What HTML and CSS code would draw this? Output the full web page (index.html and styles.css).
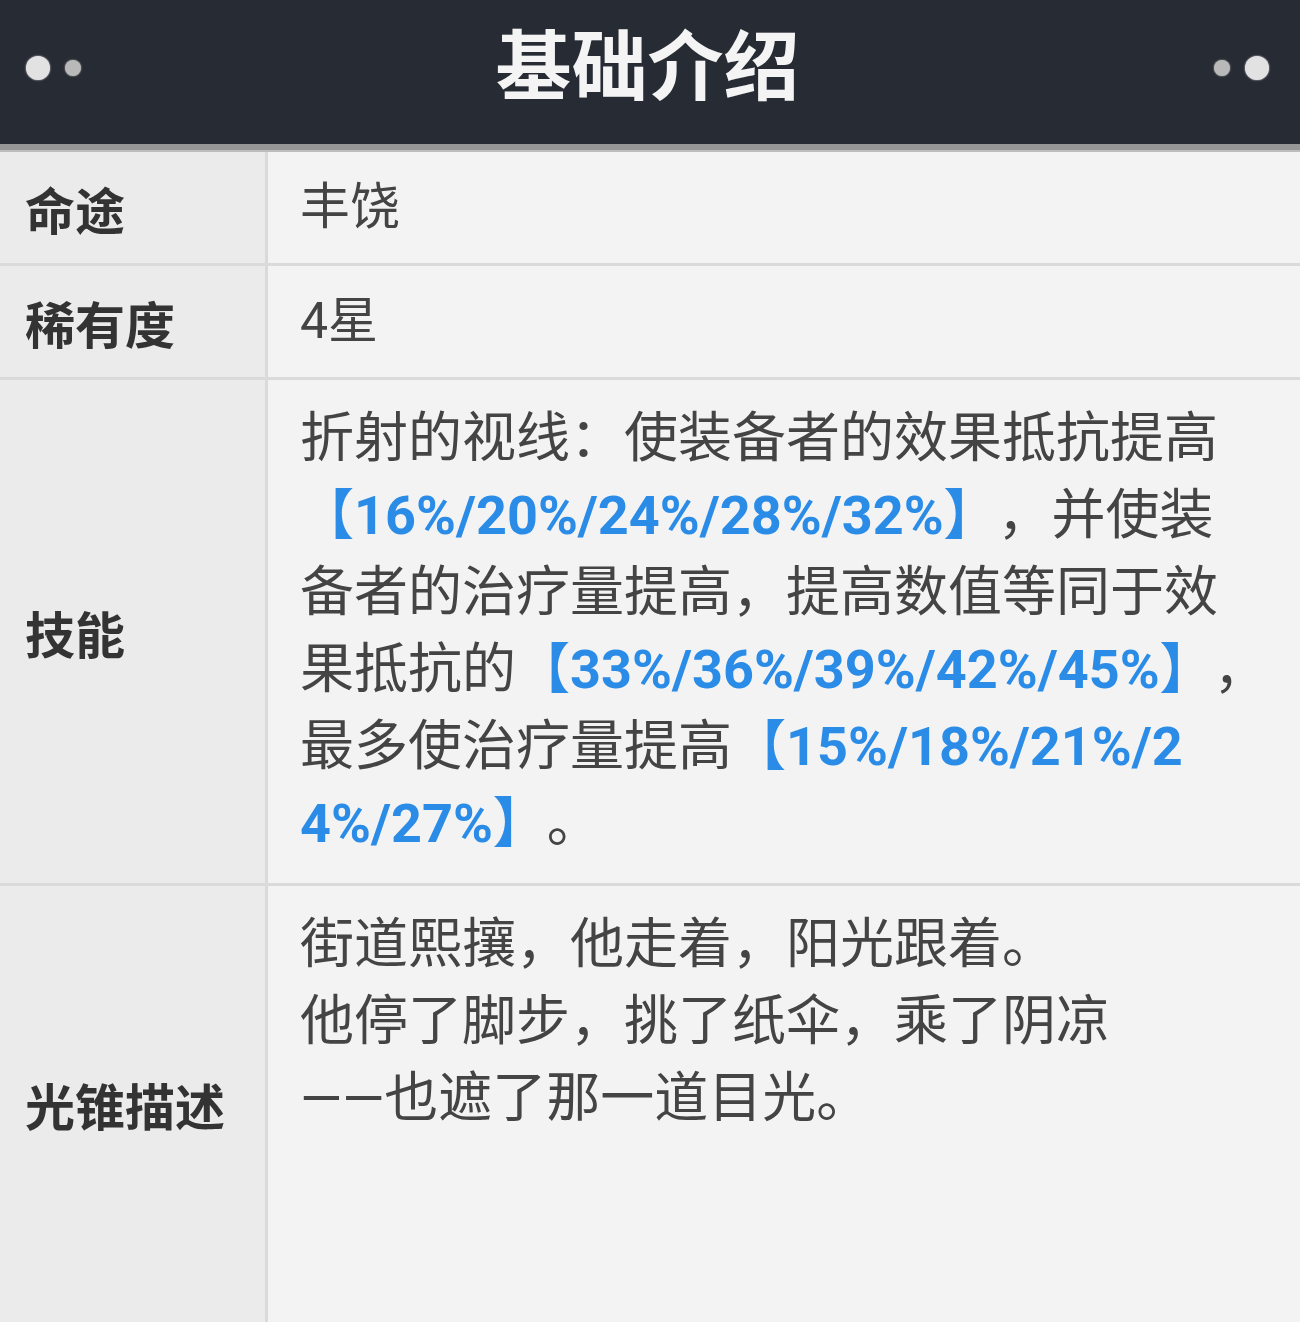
FILE: index.html
```html
<!DOCTYPE html>
<html lang="zh-CN">
<head>
  <meta charset="UTF-8">
  <meta name="viewport" content="width=device-width, initial-scale=1.0">
  <title>基础介绍</title>
  <link rel="stylesheet" href="styles.css">
</head>
<body>
  <header class="title-bar">
    <div class="dots"><span class="dot big"></span><span class="dot small"></span></div>
    <h1>基础介绍</h1>
    <div class="dots"><span class="dot small"></span><span class="dot big"></span></div>
  </header>
  <main class="info-table">
    <div class="label">命途</div>
    <div class="value short">丰饶</div>

    <div class="label">稀有度</div>
    <div class="value short">4星</div>

    <div class="label">技能</div>
    <div class="value">
      折射的视线：使装备者的效果抵抗提高<br><span class="hl">【16%/20%/24%/28%/32%】</span>，并使装<br>备者的治疗量提高，提高数值等同于效<br>果抵抗的<span class="hl">【33%/36%/39%/42%/45%】</span>，<br>最多使治疗量提高<span class="hl">【15%/18%/21%/2<br>4%/27%】</span>。
    </div>

    <div class="label">光锥描述</div>
    <div class="value">
      街道熙攘，他走着，阳光跟着。<br>他停了脚步，挑了纸伞，乘了阴凉<br>——也遮了那一道目光。
    </div>
  </main>
</body>
</html>
```

FILE: styles.css
```css
html, body {
  margin: 0;
  padding: 0;
}
body {
  width: 1300px;
  height: 1322px;
  overflow: hidden;
  font-family: Roboto, "Noto Sans CJK SC", sans-serif;
  background-color: #f2f2f2;
  display: flex;
  flex-direction: column;
}
.title-bar {
  height: 150px;
  background-color: #272b33;
  display: flex;
  align-items: center;
  justify-content: space-between;
  padding: 0 31px 0 26px;
  box-sizing: border-box;
  border-bottom: 6px solid #969696;
  box-shadow: 0 2px 0 #bdbdbd;
  flex-shrink: 0;
}
.title-bar h1 {
  margin: 0;
  color: #f4f4f4;
  font-family: "Noto Sans CJK SC", sans-serif;
  font-weight: 700;
  font-size: 76px;
  line-height: 1;
  padding-bottom: 22px;
}
.dots {
  display: flex;
  align-items: center;
  gap: 15px;
  padding-bottom: 8px;
}
.dot {
  display: block;
  border-radius: 50%;
}
.dot.big {
  width: 24px;
  height: 24px;
  background-color: #e2e2e2;
  box-shadow: 0 0 2px #e2e2e2;
}
.dot.small {
  width: 16px;
  height: 16px;
  background-color: #b9b9b9;
  box-shadow: 0 0 2px #b9b9b9;
}
.info-table {
  flex: 1;
  margin-top: 2px;
  display: grid;
  grid-template-columns: 265px 1fr;
  grid-template-rows: auto auto auto 1fr;
  gap: 3px;
  background-color: #dadada;
}
.label {
  background-color: #ebebeb;
  color: #333;
  font-weight: 700;
  font-size: 50px;
  padding: 0 25px;
  display: flex;
  align-items: center;
}
.value {
  background-color: #f3f3f3;
  color: #444;
  font-size: 54px;
  line-height: 77px;
  padding: 20px 0 21px 32px;
  text-spacing-trim: space-all;
}
.value.short {
  font-size: 50px;
  line-height: 76px;
  padding: 17px 0 18px 32px;
}
.hl {
  color: #2a8ce6;
  font-weight: 700;
}
```
